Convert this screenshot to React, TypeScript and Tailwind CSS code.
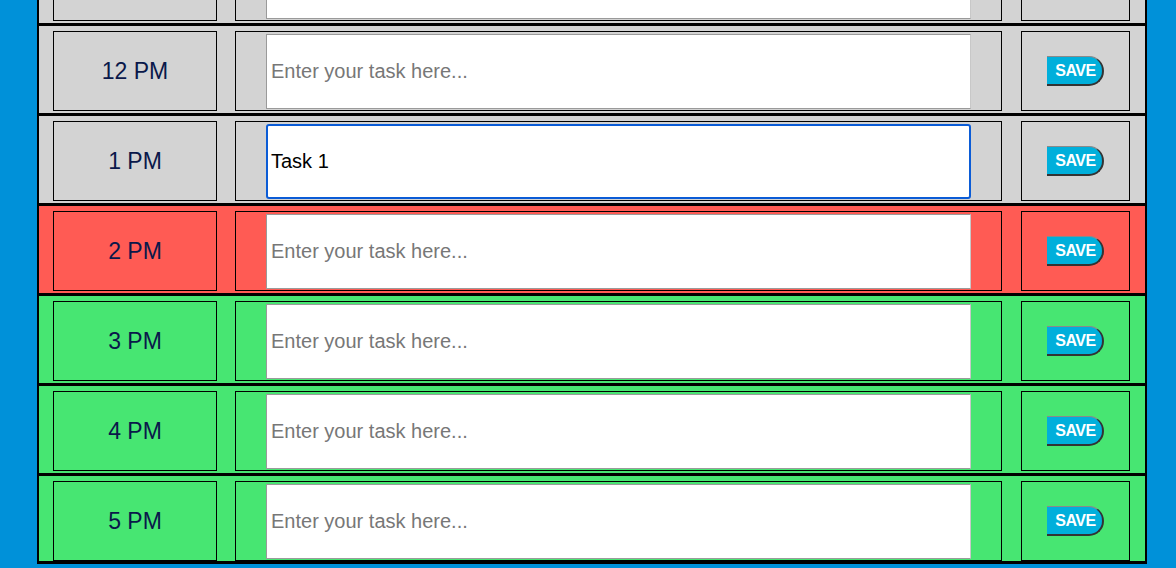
import React from "react";

type Hour = {
  label: string;
  tone: "past" | "present" | "future";
  task?: string;
  focused?: boolean;
  clipped?: boolean;
};

// first row is scrolled mostly out of view, only its lower edge shows
const hours: Hour[] = [
  { label: "11 AM", tone: "past", clipped: true },
  { label: "12 PM", tone: "past" },
  { label: "1 PM", tone: "past", task: "Task 1", focused: true },
  { label: "2 PM", tone: "present" },
  { label: "3 PM", tone: "future" },
  { label: "4 PM", tone: "future" },
  { label: "5 PM", tone: "future" },
];

const toneBg = {
  past: "bg-[#d3d3d3]",
  present: "bg-[#ff5b54]",
  future: "bg-[#47e672]",
};

function HourRow({ hour }: { hour: Hour }) {
  return (
    <div className={`flex pt-[5px] pb-[2px] last:pb-0 pl-[14px] border-t-[3px] border-black ${toneBg[hour.tone]}`}>
      {/* hour label */}
      <div className="w-[164px] h-[80px] border border-black flex items-center justify-center text-[23px] text-[#0a184a]">
        {!hour.clipped && hour.label}
      </div>

      {/* task text */}
      <div className="ml-[18px] w-[767px] h-[80px] border border-black flex items-center px-[30px]">
        <textarea
          defaultValue={hour.task}
          placeholder={hour.clipped ? "" : "Enter your task here..."}
          className={`w-full h-[75px] resize-none bg-white text-[20px] leading-[23px] text-black placeholder:text-[#777] outline-none ${
            hour.focused
              ? "border-2 border-[#0b5cd6] rounded-[3px] pt-[24px] pl-[3px]"
              : "border border-[#9a9a9a] border-r-[#c8c8c8] pt-[25px] pl-[4px]"
          }`}
        />
      </div>

      {/* save */}
      <div className="ml-[19px] w-[109px] h-[80px] border border-black flex items-center justify-center">
        {!hour.clipped && (
          <button className="w-[57px] h-[30px] bg-[#00afdb] text-white font-bold text-[16px] tracking-[-0.5px] rounded-r-[15px] border-t border-t-[#8a8a8a] border-r-2 border-b-2 border-r-[#333] border-b-[#333] flex items-center justify-center leading-none pl-[2px]">
            SAVE
          </button>
        )}
      </div>
    </div>
  );
}

export default function App() {
  return (
    <div className="h-[568px] overflow-hidden bg-[#0091d9] font-['Liberation_Sans',Arial,sans-serif]">
      <div className="ml-[37px] w-[1110px] -mt-[67px] border-x-2 border-b-[3px] border-black">
        {hours.map((h) => (
          <HourRow key={h.label} hour={h} />
        ))}
      </div>
    </div>
  );
}
